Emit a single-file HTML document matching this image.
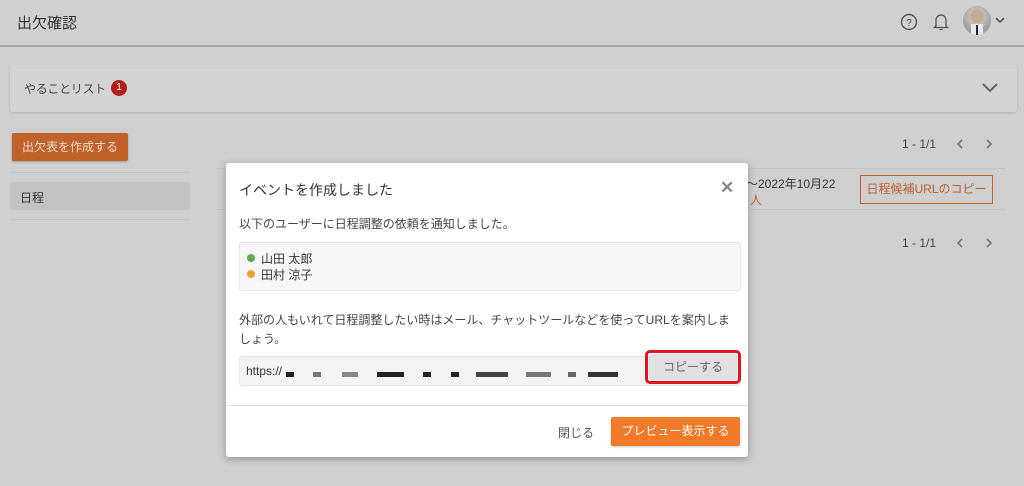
<!DOCTYPE html>
<html><head><meta charset="utf-8"><style>
*{box-sizing:border-box;margin:0;padding:0}
body{width:1024px;height:486px;overflow:hidden;background:#cfcfcf;font-family:"Liberation Sans","Noto Sans CJK JP",sans-serif;color:#333;position:relative}
.a{position:absolute}
</style></head><body>
<div class="a" style="left:0;top:0;width:1024px;height:47px;background:#d0d0d0;border-bottom:2px solid #a9a9a9"></div>
<div class="a" style="left:17px;top:12px;font-size:15px;color:#333">出欠確認</div>
<svg class="a" style="left:900px;top:13px" width="18" height="18" viewBox="0 0 18 18"><circle cx="9" cy="9" r="7.5" fill="none" stroke="#555" stroke-width="1.4"/><text x="9" y="13" font-size="10" text-anchor="middle" fill="#555" font-family="Liberation Sans">?</text></svg>
<svg class="a" style="left:932px;top:12px" width="18" height="20" viewBox="0 0 18 20"><path d="M4 14V8a5 5 0 0 1 10 0v6l1.5 1.5h-13z" fill="none" stroke="#555" stroke-width="1.3"/><path d="M7.5 17.5h3" stroke="#555" stroke-width="1.3"/></svg>
<div class="a" style="left:963px;top:6px;width:28px;height:29px;border-radius:50%;background:radial-gradient(circle at 50% 35%,#c9a98f 0 28%,#bfbfbf 30%,#9a9a9a 70%);overflow:hidden"><div class="a" style="left:8px;top:18px;width:12px;height:12px;background:#e8e8e8"></div><div class="a" style="left:13px;top:19px;width:2px;height:10px;background:#223"></div></div>
<svg class="a" style="left:994px;top:16px" width="12" height="8"><path d="M2 2l4 4 4-4" fill="none" stroke="#555" stroke-width="1.6"/></svg>
<div class="a" style="left:10px;top:65px;width:1007px;height:47px;background:#d3d3d3;border-radius:3px;box-shadow:0 1px 2px rgba(0,0,0,.15)"></div>
<div class="a" style="left:24px;top:80px;font-size:12px;color:#444;letter-spacing:-0.3px">やることリスト</div>
<div class="a" style="left:111px;top:80px;width:16px;height:16px;border-radius:50%;background:#b51d1d;color:#fff;font-size:10px;text-align:center;line-height:16px">1</div>
<svg class="a" style="left:981px;top:82px" width="18" height="12"><path d="M2 2l7 7 7-7" fill="none" stroke="#666" stroke-width="2"/></svg>
<div class="a" style="left:12px;top:133px;width:116px;height:28px;background:#c0622a;color:#f0dccf;font-size:12px;text-align:center;line-height:28px;border-radius:2px;box-shadow:0 1px 2px rgba(0,0,0,.25)">出欠表を作成する</div>
<div class="a" style="left:902px;top:137px;font-size:12px;color:#444">1 - 1/1</div>
<svg class="a" style="left:955px;top:138px" width="10" height="12"><path d="M7 2L3 6l4 4" fill="none" stroke="#777" stroke-width="1.6"/></svg>
<svg class="a" style="left:984px;top:138px" width="10" height="12"><path d="M3 2l4 4-4 4" fill="none" stroke="#777" stroke-width="1.6"/></svg>
<div class="a" style="left:10px;top:172px;width:180px;height:1px;background:#c0c0c0"></div>
<div class="a" style="left:10px;top:182px;width:180px;height:28px;background:#c3c3c3"></div>
<div class="a" style="left:20px;top:189px;font-size:12px;color:#333">日程</div>
<div class="a" style="left:10px;top:219px;width:180px;height:1px;background:#c0c0c0"></div>
<div class="a" style="left:216px;top:168px;width:790px;height:1px;background:#c3c3c3"></div>
<div class="a" style="left:216px;top:209px;width:790px;height:1px;background:#c3c3c3"></div>
<div class="a" style="left:746px;top:175px;font-size:12px;color:#333">～2022年10月22</div>
<div class="a" style="left:750px;top:191px;font-size:12px;color:#c0622a">人</div>
<div class="a" style="left:860px;top:175px;width:133px;height:29px;border:1px solid #c0622a;color:#c0622a;font-size:12px;text-align:center;line-height:27px">日程候補URLのコピー</div>
<div class="a" style="left:902px;top:236px;font-size:12px;color:#444">1 - 1/1</div>
<svg class="a" style="left:955px;top:237px" width="10" height="12"><path d="M7 2L3 6l4 4" fill="none" stroke="#777" stroke-width="1.6"/></svg>
<svg class="a" style="left:984px;top:237px" width="10" height="12"><path d="M3 2l4 4-4 4" fill="none" stroke="#777" stroke-width="1.6"/></svg>

<div class="a" style="left:226px;top:163px;width:522px;height:294px;background:#fff;border-radius:3px;box-shadow:0 2px 8px rgba(0,0,0,.3)">
<div class="a" style="left:13px;top:17px;font-size:14px;color:#333">イベントを作成しました</div>
<div class="a" style="left:494px;top:15px;font-size:17px;font-weight:bold;color:#888">✕</div>
<div class="a" style="left:13px;top:52px;font-size:12px;color:#444">以下のユーザーに日程調整の依頼を通知しました。</div>
<div class="a" style="left:13px;top:79px;width:502px;height:49px;background:#f7f7f7;border:1px solid #e3e3e3;border-radius:3px"></div>
<div class="a" style="left:21px;top:91px;width:8px;height:8px;border-radius:50%;background:#5bb04d"></div>
<div class="a" style="left:35px;top:87px;font-size:12px;color:#333">山田 太郎</div>
<div class="a" style="left:21px;top:107px;width:8px;height:8px;border-radius:50%;background:#f0a030"></div>
<div class="a" style="left:35px;top:103px;font-size:12px;color:#333">田村 涼子</div>
<div class="a" style="left:13px;top:148px;width:500px;font-size:12px;line-height:19px;color:#444">外部の人もいれて日程調整したい時はメール、チャットツールなどを使ってURLを案内しましょう。</div>
<div class="a" style="left:13px;top:193px;width:502px;height:30px;background:#f4f4f4;border:1px solid #e3e3e3;border-radius:3px"></div>
<div class="a" style="left:20px;top:201px;font-size:12px;color:#333">https://</div>
<div class="a" style="left:60px;top:209px;width:8px;height:5px;background:#222"></div>
<div class="a" style="left:87px;top:209px;width:8px;height:5px;background:#777"></div>
<div class="a" style="left:116px;top:209px;width:16px;height:5px;background:#888"></div>
<div class="a" style="left:151px;top:209px;width:27px;height:5px;background:#222"></div>
<div class="a" style="left:197px;top:209px;width:8px;height:5px;background:#222"></div>
<div class="a" style="left:225px;top:209px;width:8px;height:5px;background:#222"></div>
<div class="a" style="left:250px;top:209px;width:32px;height:5px;background:#444"></div>
<div class="a" style="left:300px;top:209px;width:25px;height:5px;background:#777"></div>
<div class="a" style="left:342px;top:209px;width:8px;height:5px;background:#666"></div>
<div class="a" style="left:362px;top:209px;width:30px;height:5px;background:#333"></div>
<div class="a" style="left:419px;top:187px;width:96px;height:34px;border:3px solid #e0141e;border-radius:5px"></div>
<div class="a" style="left:423px;top:191px;width:88px;height:26px;background:#e0e0e0;border-radius:2px;color:#666;font-size:12px;text-align:center;line-height:26px">コピーする</div>
<div class="a" style="left:0;top:242px;width:522px;height:1px;background:#e2e2e2"></div>
<div class="a" style="left:332px;top:261px;font-size:12px;color:#555">閉じる</div>
<div class="a" style="left:385px;top:254px;width:129px;height:29px;background:#f07a2a;color:#fff;font-size:12px;text-align:center;line-height:29px;border-radius:2px;box-shadow:0 1px 2px rgba(0,0,0,.25)">プレビュー表示する</div>
</div>
</body></html>
